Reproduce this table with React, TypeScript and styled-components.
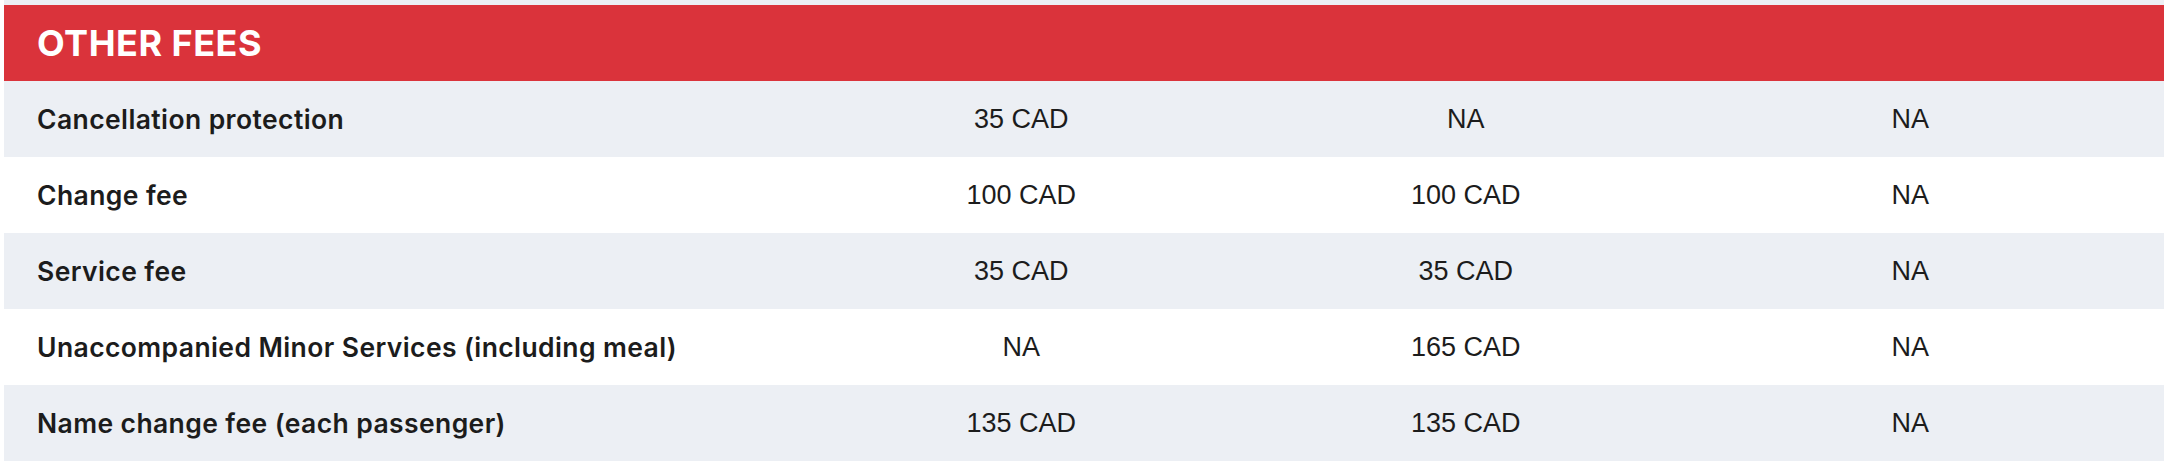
import React from "react";
import styled, { createGlobalStyle } from "styled-components";

const GlobalStyle = createGlobalStyle`
  html, body {
    margin: 0;
    padding: 0;
    background: #ffffff;
  }
  body {
    font-family: "Inter", "Liberation Sans", Arial, sans-serif;
    -webkit-font-smoothing: antialiased;
  }
`;

const Page = styled.div`
  width: 2160px;
  margin-left: 4px;
`;

const PrevSectionTail = styled.div`
  height: 5px;
  background: #eceff4;
`;

const Section = styled.section`
  display: flex;
  flex-direction: column;
`;

const Header = styled.h2`
  margin: 0;
  height: 76px;
  display: flex;
  align-items: center;
  padding: 0 33px;
  background: #da333b;
  color: #ffffff;
  font-family: "Inter", "Liberation Sans", sans-serif;
  font-weight: 700;
  font-size: 36px;
  letter-spacing: 0.5px;
  text-transform: uppercase;
`;

const Row = styled.div<{ $shaded: boolean }>`
  height: 76px;
  display: grid;
  grid-template-columns: 762px repeat(3, 444.5px);
  align-items: center;
  padding: 0 32px 0 33px;
  background: ${(p) => (p.$shaded ? "#eceff4" : "#ffffff")};
`;

const LabelCell = styled.div`
  font-family: "Inter", "Liberation Sans", sans-serif;
  font-weight: 600;
  font-size: 26.5px;
  letter-spacing: 0.4px;
  color: #1c1c1c;
  white-space: nowrap;
`;

const ValueCell = styled.div`
  text-align: center;
  font-family: "Liberation Sans", Arial, sans-serif;
  font-size: 27px;
  color: #1c1c1c;
  white-space: nowrap;
`;

const rows: [string, string, string, string][] = [
  ["Cancellation protection", "35 CAD", "NA", "NA"],
  ["Change fee", "100 CAD", "100 CAD", "NA"],
  ["Service fee", "35 CAD", "35 CAD", "NA"],
  ["Unaccompanied Minor Services (including meal)", "NA", "165 CAD", "NA"],
  ["Name change fee (each passenger)", "135 CAD", "135 CAD", "NA"],
];

export default function App() {
  return (
    <>
      <GlobalStyle />
      <Page>
        <PrevSectionTail />
        <Section>
          <Header>Other fees</Header>
          {rows.map(([label, a, b, c], i) => (
            <Row key={label} $shaded={i % 2 === 0}>
              <LabelCell>{label}</LabelCell>
              <ValueCell>{a}</ValueCell>
              <ValueCell>{b}</ValueCell>
              <ValueCell>{c}</ValueCell>
            </Row>
          ))}
        </Section>
      </Page>
    </>
  );
}
